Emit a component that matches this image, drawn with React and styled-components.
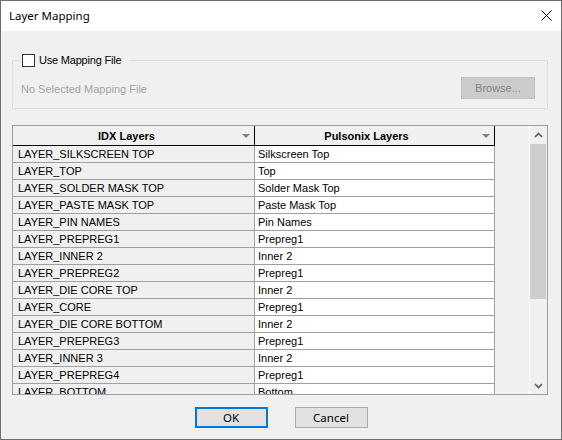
import React from 'react'
import styled, {createGlobalStyle} from 'styled-components'

const GlobalStyle = createGlobalStyle`
    html, body {
        margin: 0;
        padding: 0;
        background: #f0f0f0;
    }
    * {
        box-sizing: border-box;
    }
`

const UI_FONT = `"Liberation Sans", Arial, sans-serif`

const Window = styled.div`
    width: 562px;
    height: 440px;
    border: 1px solid #6e6e6e;
    background: #f0f0f0;
    display: flex;
    flex-direction: column;
    font-family: ${UI_FONT};
    font-size: 11px;
    color: #000;
    overflow: hidden;
`

const TitleBar = styled.div`
    height: 30px;
    flex: none;
    background: #fff;
    display: flex;
    align-items: center;
    justify-content: space-between;
    padding: 0 9px 1px 8px;
`

const Title = styled.span`
    font-family: "Noto Sans", sans-serif;
    font-size: 11.5px;
    color: #000;
`

const CloseButton = styled.span`
    width: 12px;
    height: 12px;
    display: flex;
    align-items: center;
    justify-content: center;
`

const Body = styled.div`
    flex: 1;
    display: flex;
    flex-direction: column;
    padding: 22px 13px 0 11px;
`

const GroupBox = styled.fieldset`
    margin: 0;
    border: 1px solid #dcdcdc;
    padding: 10px 12px 9px 8px;
`

const Legend = styled.legend`
    padding: 0 8px 0 1px;
    height: 14px;
    display: flex;
    align-items: center;
    gap: 4px;
`

const CheckBox = styled.span`
    width: 13px;
    height: 13px;
    border: 1px solid #333;
    background: #fff;
    display: inline-block;
`

const Label = styled.span`
    font-size: 11px;
    letter-spacing: -0.2px;
`

const FileRow = styled.div`
    display: flex;
    align-items: center;
    justify-content: space-between;
`

const FileText = styled.span`
    color: #a3a3a3;
    padding-top: 1px;
`

const DisabledButton = styled.div`
    width: 74px;
    height: 22px;
    background: #cccccc;
    border: 1px solid #bfbfbf;
    color: #838383;
    display: flex;
    align-items: center;
    justify-content: center;
`

const Grid = styled.div`
    margin-top: 16px;
    height: 270px;
    border: 1px solid #a0a0a0;
    display: flex;
    background: #f0f0f0;
`

const TableArea = styled.div`
    flex: 1;
    overflow: hidden;
`

const Row = styled.div`
    display: grid;
    grid-template-columns: 242px 240px;
    height: ${({header}) => header ? '20px' : '17px'};
`

const HeadCell = styled.div`
    position: relative;
    display: flex;
    align-items: center;
    justify-content: center;
    padding-right: ${({wide}) => wide ? '16px' : '14px'};
    padding-top: 1px;
    font-weight: bold;
    background: #f0f0f0;
    border-right: 1px solid #000;
    border-bottom: 1px solid #000;
`

const SortArrow = styled.span`
    position: absolute;
    right: 4px;
    top: 8px;
    width: 0;
    height: 0;
    border-left: 4px solid transparent;
    border-right: 4px solid transparent;
    border-top: 4px solid #808080;
`

const Cell = styled.div`
    display: flex;
    align-items: center;
    padding-left: ${({first}) => first ? '5px' : '3px'};
    background: ${({first}) => first ? '#f0f0f0' : '#fff'};
    border-right: 1px solid #a0a0a0;
    border-bottom: 1px solid #a0a0a0;
    white-space: nowrap;
    overflow: hidden;
`

const ScrollBar = styled.div`
    width: 18px;
    flex: none;
    border-left: 1px solid #fff;
    display: flex;
    flex-direction: column;
`

const ScrollArrow = styled.div`
    height: 17px;
    flex: none;
    display: flex;
    align-items: center;
    justify-content: center;
    padding-right: 1px;
`

const Thumb = styled.div`
    height: 155px;
    margin: 1px 1px 0 0;
    background: #cdcdcd;
`

const Track = styled.div`
    flex: 1;
`

const ButtonRow = styled.div`
    margin-top: 12px;
    display: flex;
    justify-content: center;
    gap: 27px;
    padding-left: 2px;
`

const DialogButton = styled.div`
    width: 73px;
    height: 21px;
    background: #e1e1e1;
    border: ${({primary}) => primary ? '2px solid #0078d7' : '1px solid #adadad'};
    display: flex;
    align-items: center;
    justify-content: center;
    font-family: "Noto Sans", sans-serif;
    font-size: 11.5px;
`

const Chevron = ({up}) => (
    <svg width="9" height="6" viewBox="0 0 9 6">
        <path d={up ? 'M1 5 L4.5 1.5 L8 5' : 'M1 1 L4.5 4.5 L8 1'} fill="none" stroke="#606060" strokeWidth="1.6"/>
    </svg>
)

const rows = [
    ['LAYER_SILKSCREEN TOP', 'Silkscreen Top'],
    ['LAYER_TOP', 'Top'],
    ['LAYER_SOLDER MASK TOP', 'Solder Mask Top'],
    ['LAYER_PASTE MASK TOP', 'Paste Mask Top'],
    ['LAYER_PIN NAMES', 'Pin Names'],
    ['LAYER_PREPREG1', 'Prepreg1'],
    ['LAYER_INNER 2', 'Inner 2'],
    ['LAYER_PREPREG2', 'Prepreg1'],
    ['LAYER_DIE CORE TOP', 'Inner 2'],
    ['LAYER_CORE', 'Prepreg1'],
    ['LAYER_DIE CORE BOTTOM', 'Inner 2'],
    ['LAYER_PREPREG3', 'Prepreg1'],
    ['LAYER_INNER 3', 'Inner 2'],
    ['LAYER_PREPREG4', 'Prepreg1'],
    ['LAYER_BOTTOM', 'Bottom'],
]

export default function App() {
    return <>
        <GlobalStyle/>
        <Window>
            <TitleBar>
                <Title>Layer Mapping</Title>
                <CloseButton>
                    <svg width="11" height="11" viewBox="0 0 11 11">
                        <path d="M0.5 0.5 L10.5 10.5 M10.5 0.5 L0.5 10.5" stroke="#000" strokeWidth="1"/>
                    </svg>
                </CloseButton>
            </TitleBar>
            <Body>
                <GroupBox>
                    <Legend>
                        <CheckBox/>
                        <Label>Use Mapping File</Label>
                    </Legend>
                    <FileRow>
                        <FileText>No Selected Mapping File</FileText>
                        <DisabledButton>Browse...</DisabledButton>
                    </FileRow>
                </GroupBox>
                <Grid>
                    <TableArea>
                        <Row header>
                            <HeadCell>IDX Layers<SortArrow/></HeadCell>
                            <HeadCell wide>Pulsonix Layers<SortArrow/></HeadCell>
                        </Row>
                        {rows.map(([idx, pulsonix]) => (
                            <Row key={idx}>
                                <Cell first>{idx}</Cell>
                                <Cell>{pulsonix}</Cell>
                            </Row>
                        ))}
                    </TableArea>
                    <ScrollBar>
                        <ScrollArrow><Chevron up/></ScrollArrow>
                        <Thumb/>
                        <Track/>
                        <ScrollArrow><Chevron/></ScrollArrow>
                    </ScrollBar>
                </Grid>
                <ButtonRow>
                    <DialogButton primary>OK</DialogButton>
                    <DialogButton>Cancel</DialogButton>
                </ButtonRow>
            </Body>
        </Window>
    </>
}
